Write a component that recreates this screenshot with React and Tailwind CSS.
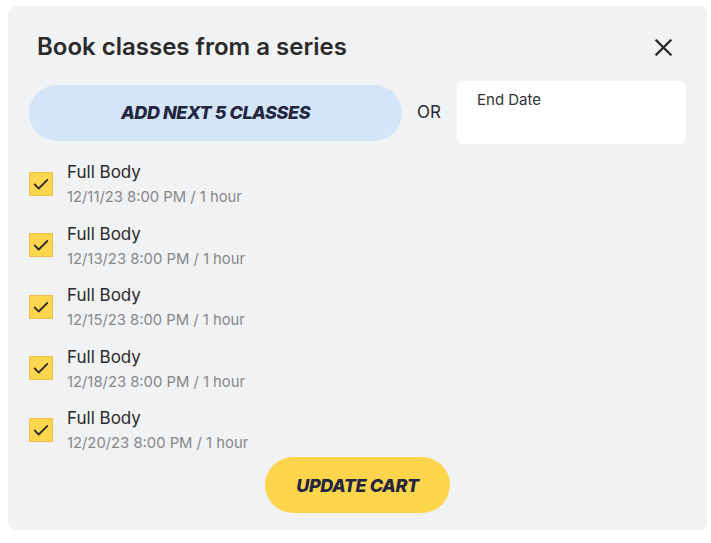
import React from 'react';

const classes = [
  { name: 'Full Body', when: '12/11/23 8:00 PM / 1 hour' },
  { name: 'Full Body', when: '12/13/23 8:00 PM / 1 hour' },
  { name: 'Full Body', when: '12/15/23 8:00 PM / 1 hour' },
  { name: 'Full Body', when: '12/18/23 8:00 PM / 1 hour' },
  { name: 'Full Body', when: '12/20/23 8:00 PM / 1 hour' },
];

const Check = () => (
  <div className="w-6 h-6 shrink-0 bg-[#fdd64f] border border-[#f3bd4c] flex items-center justify-center">
    <svg width="18" height="18" viewBox="0 0 24 24" fill="none" stroke="#2a2a2a" strokeWidth="2.4" strokeLinecap="round" strokeLinejoin="round">
      <path d="M3.5 12.5l5.5 5.5L20.5 6.5" />
    </svg>
  </div>
);

export default function App() {
  return (
    <div className="w-[711px] h-[543px] bg-white pt-[6px] pl-[8px]" style={{ fontFamily: 'Inter, "Noto Sans", sans-serif' }}>
      <div className="w-[699px] h-[524px] bg-[#f1f2f4] rounded-lg px-[21px] pt-[26px] pb-[17px] flex flex-col">
        {/* header */}
        <div className="flex items-center justify-between h-[30px]">
          <h2 className="ml-2 text-[24px] font-semibold text-[#2a2a2a] leading-[30px]">Book classes from a series</h2>
          <button className="mr-[14px] w-[17px] h-[17px]">
            <svg width="17" height="17" viewBox="0 0 17 17" fill="none" stroke="#2a2a2a" strokeWidth="2.3" strokeLinecap="square">
              <path d="M1.5 1.5l14 14M15.5 1.5l-14 14" />
            </svg>
          </button>
        </div>

        {/* add or pick date */}
        <div className="mt-[19px] flex items-center">
          <button className="flex-1 h-14 rounded-full bg-[#d3e5f7] text-[18px] font-extrabold italic tracking-tight text-[#23253f]">
            ADD NEXT 5 CLASSES
          </button>
          <span className="ml-[15px] mr-[16px] text-[17px] text-[#2a2a2a]">OR</span>
          <div className="w-[229px] h-[63px] bg-white rounded-md pl-5 pt-[6px]">
            <span className="text-[15px] text-[#333] leading-5">End Date</span>
          </div>
        </div>

        {/* class list */}
        <div className="mt-4 flex flex-col gap-[14.5px]">
          {classes.map((c, i) => (
            <div key={i} className="flex items-center gap-[14px] h-[47px]">
              <Check />
              <div className="flex flex-col">
                <span className="text-[17px] leading-6 text-[#2a2a2a]">{c.name}</span>
                <span className="mt-[3px] text-[14.8px] leading-5 text-[#888]">{c.when}</span>
              </div>
            </div>
          ))}
        </div>

        <div className="mt-1 flex justify-center">
          <button className="w-[185px] h-14 rounded-full bg-[#fcd54d] text-[18px] font-extrabold italic tracking-tight text-[#23253f]">
            UPDATE CART
          </button>
        </div>
      </div>
    </div>
  );
}
